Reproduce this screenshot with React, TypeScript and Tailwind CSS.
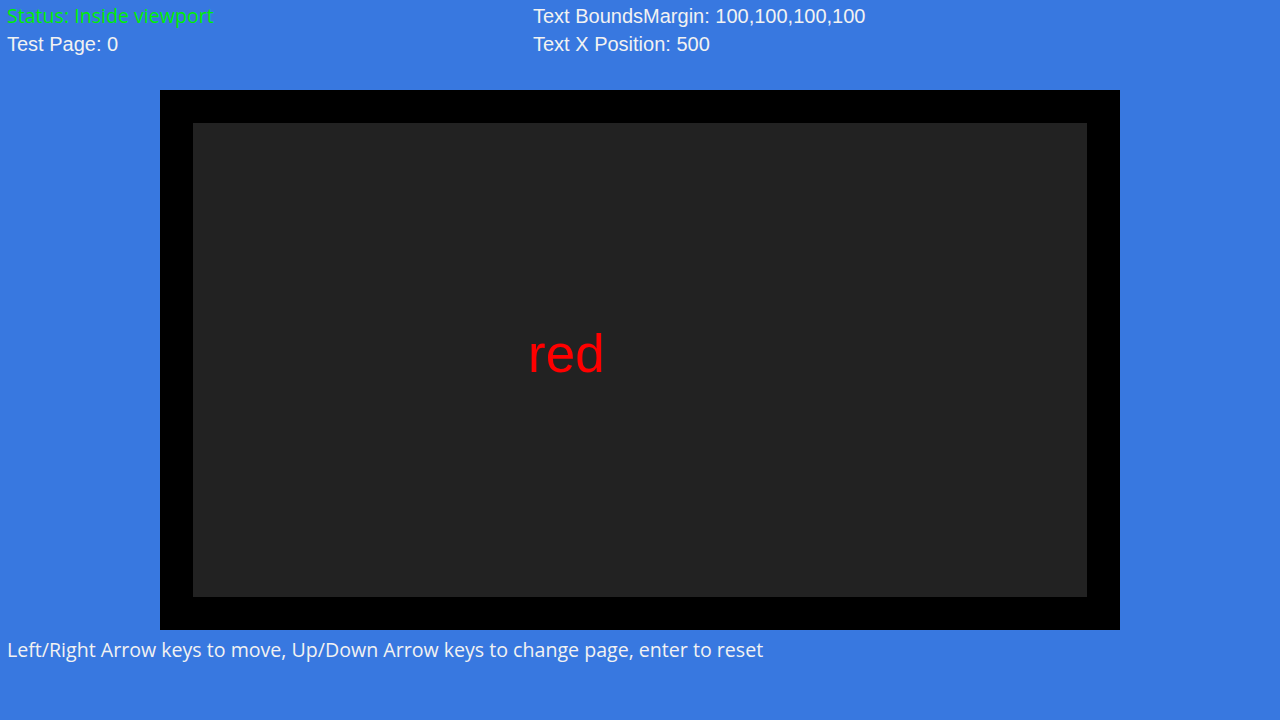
import React from "react";

const ubuntuish = "font-['Open_Sans','Noto_Sans',sans-serif]";
const arialish = "font-['Liberation_Sans',Arial,sans-serif]";

export default function App() {
  return (
    <div className="w-[1280px] h-[720px] bg-[#3878e0] text-[#f2f2f2] overflow-hidden">
      {/* Header readouts */}
      <div className="flex pt-[2px] text-[20px] leading-[28px]">
        <div className="w-[533px] pl-[7px]">
          <div className={`${ubuntuish} text-[#00f000] text-[19.6px]`}>Status: Inside viewport</div>
          <div className={arialish}>Test Page: 0</div>
        </div>
        <div className={arialish}>
          <div>Text BoundsMargin: 100,100,100,100</div>
          <div>Text X Position: 500</div>
        </div>
      </div>

      {/* Stage */}
      <div className="mt-[32px] flex justify-center">
        <div className="w-[960px] h-[540px] bg-black p-[33px]">
          <div className="h-full bg-[#222222] pl-[335px] pt-[204px]">
            <div className={`${arialish} text-[53px] leading-none text-[#ff0000]`}>red</div>
          </div>
        </div>
      </div>

      {/* Help text */}
      <div className={`${ubuntuish} mt-[6px] pl-[7px] text-[19.6px] leading-[28px]`}>
        Left/Right Arrow keys to move, Up/Down Arrow keys to change page, enter to reset
      </div>
    </div>
  );
}
